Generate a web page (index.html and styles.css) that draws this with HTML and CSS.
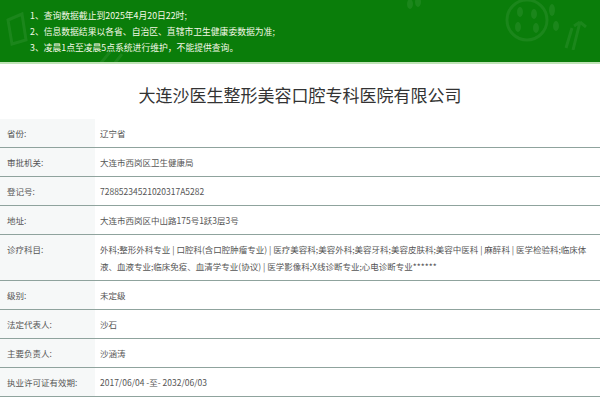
FILE: index.html
```html
<!DOCTYPE html>
<html lang="zh-CN">
<head>
<meta charset="utf-8">
<title>大连沙医生整形美容口腔专科医院有限公司</title>
<link rel="stylesheet" href="styles.css">
</head>
<body>
<div class="banner">
  <svg class="deco" width="600" height="64" viewBox="0 0 600 64">
    <g fill="none" stroke="#ffffff" stroke-opacity="0.07" stroke-width="3">
      <circle cx="527" cy="20" r="20"/>
      <path d="M573 50 L580 22 M580 22 L574 26 M580 22 L586 27 M566 48 L572 28"/>
      <path d="M8 20 L22 14 L26 40 L12 44 Z"/>
      <path d="M100 64 L110 52 M114 64 L122 54"/>
    </g>
    <g fill="#ffffff" fill-opacity="0.07">
      <ellipse cx="520" cy="12" rx="3" ry="5"/>
      <ellipse cx="534" cy="14" rx="3" ry="5"/>
      <ellipse cx="518" cy="27" rx="3" ry="5"/>
      <ellipse cx="536" cy="28" rx="3" ry="5"/>
      <ellipse cx="552" cy="10" rx="3" ry="6"/>
      <ellipse cx="556" cy="26" rx="3" ry="5"/>
      <ellipse cx="410" cy="4" rx="3" ry="5"/>
      <ellipse cx="418" cy="2" rx="3" ry="5"/>
    </g>
  </svg>
  <p class="note">1、查询数据截止到2025年4月20日22时;</p>
  <p class="note">2、信息数据结果以各省、自治区、直辖市卫生健康委数据为准;</p>
  <p class="note">3、凌晨1点至凌晨5点系统进行维护，不能提供查询。</p>
</div>
<h1 class="title">大连沙医生整形美容口腔专科医院有限公司</h1>
<div class="table">
  <div class="row"><div class="label">省份:</div><div class="value">辽宁省</div></div>
  <div class="row"><div class="label">审批机关:</div><div class="value">大连市西岗区卫生健康局</div></div>
  <div class="row"><div class="label">登记号:</div><div class="value">72885234521020317A5282</div></div>
  <div class="row"><div class="label">地址:</div><div class="value">大连市西岗区中山路175号1跃3层3号</div></div>
  <div class="row"><div class="label">诊疗科目:</div><div class="value">外科;整形外科专业 | 口腔科(含口腔肿瘤专业) | 医疗美容科;美容外科;美容牙科;美容皮肤科;美容中医科 | 麻醉科 | 医学检验科;临床体液、血液专业;临床免疫、血清学专业(协议) | 医学影像科;X线诊断专业;心电诊断专业******</div></div>
  <div class="row"><div class="label">级别:</div><div class="value">未定级</div></div>
  <div class="row"><div class="label">法定代表人:</div><div class="value">沙石</div></div>
  <div class="row"><div class="label">主要负责人:</div><div class="value">沙涵涛</div></div>
  <div class="row"><div class="label">执业许可证有效期:</div><div class="value">2017/06/04 -至- 2032/06/03</div></div>
</div>
</body>
</html>
```
FILE: styles.css
```css
html, body {
  margin: 0;
  padding: 0;
  background: #ffffff;
  font-family: "Noto Sans CJK SC", "Noto Sans", sans-serif;
}
.banner {
  position: relative;
  height: 64px;
  box-sizing: border-box;
  padding: 8px 0 0 30px;
  background: #0a7d0a;
  border-bottom: 2px solid #bfe3b6;
  overflow: hidden;
}
.deco {
  position: absolute;
  left: 0;
  top: 0;
}
.note {
  position: relative;
  margin: 0;
  font-size: 8.8px;
  line-height: 16px;
  color: #f4f8e6;
  white-space: nowrap;
}
.title {
  margin: 0;
  padding: 19px 0 12px;
  text-align: center;
  font-size: 17px;
  line-height: 24px;
  font-weight: normal;
  color: #333333;
}
.table {
  display: flex;
  flex-direction: column;
}
.row {
  display: grid;
  grid-template-columns: 95px 1fr;
  border-bottom: 1px solid #8fa39d;
}
.label {
  background: #f6f8f8;
  padding: 6px 0 5px 7px;
  font-size: 8.5px;
  line-height: 17px;
  color: #555555;
}
.value {
  padding: 6px 10px 5px 5px;
  font-size: 8.5px;
  line-height: 17px;
  color: #555555;
}
```
